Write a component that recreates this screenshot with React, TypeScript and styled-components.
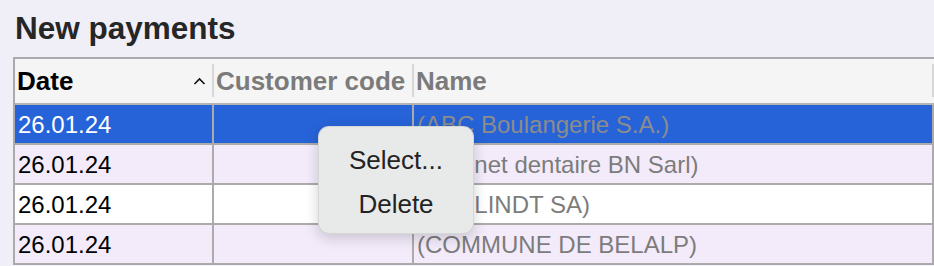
import React from "react";
import styled, { createGlobalStyle } from "styled-components";

const Global = createGlobalStyle`
  html, body { margin: 0; padding: 0; background: #f0eef7; }
  body { font-family: "Liberation Sans", Arial, sans-serif; overflow: hidden; }
`;

const Page = styled.div`
  position: relative;
  width: 934px;
  height: 266px;
  padding: 12px 0 0 13px;
  box-sizing: border-box;
`;

const Title = styled.h1`
  margin: 0 0 13px 2px;
  font-size: 31.5px;
  line-height: 32px;
  font-weight: 700;
  color: #262626;
`;

const Table = styled.div`
  width: 921px;
  border-top: 2px solid #ababab;
  border-left: 2px solid #ababab;
  box-sizing: border-box;
`;

const HeaderRow = styled.div`
  display: grid;
  grid-template-columns: 199px 200px 1fr;
  height: 46px;
  background: #f5f5f5;
  border-bottom: 2px solid #b4b4b4;
  box-sizing: border-box;
`;

const HeaderCell = styled.div<{ $active?: boolean }>`
  position: relative;
  display: flex;
  align-items: center;
  padding-left: 2px;
  font-size: 26px;
  font-weight: 700;
  line-height: 44px;
  color: ${(p) => (p.$active ? "#000" : "#7b7b7b")};
  white-space: nowrap;
  &::after {
    content: "";
    position: absolute;
    right: 0;
    top: 5px;
    bottom: 6px;
    width: 2px;
    background: #d6d6d6;
  }
`;

const SortCaret = styled.svg`
  margin-left: auto;
  margin-right: 8px;
  width: 13px;
  height: 8px;
`;

const Row = styled.div<{ $bg: string }>`
  display: grid;
  grid-template-columns: 199px 200px 1fr;
  height: 40px;
  background: ${(p) => p.$bg};
`;

const Cell = styled.div<{ $color: string }>`
  border-right: 2px solid #ababab;
  border-bottom: 2px solid #ababab;
  padding: 1px 0 0 3px;
  font-size: 24px;
  line-height: 37px;
  color: ${(p) => p.$color};
  white-space: nowrap;
  overflow: hidden;
`;

const Menu = styled.div`
  position: absolute;
  left: 318px;
  top: 126px;
  width: 156px;
  height: 108px;
  box-sizing: border-box;
  padding: 11px 0 9px;
  border-radius: 11px;
  background: #e8e9e9;
  border: 1px solid rgba(0, 0, 0, 0.08);
  box-shadow: 0 4px 14px rgba(0, 0, 0, 0.18);
  display: flex;
  flex-direction: column;
`;

const MenuItem = styled.div`
  height: 44px;
  line-height: 44px;
  text-align: center;
  font-size: 26px;
  color: #232323;
`;

const rows = [
  { date: "26.01.24", name: "(ABC Boulangerie S.A.)", bg: "#2763d8", selected: true },
  { date: "26.01.24", name: "(Cabinet dentaire BN Sarl)", bg: "#f3ebfa" },
  { date: "26.01.24", name: "(Cie. LINDT SA)", bg: "#ffffff" },
  { date: "26.01.24", name: "(COMMUNE DE BELALP)", bg: "#f3ebfa" },
];

export default function App() {
  return (
    <Page>
      <Global />
      <Title>New payments</Title>
      <Table>
        <HeaderRow>
          <HeaderCell $active>
            Date
            <SortCaret viewBox="0 0 13 8">
              <polyline points="1.5,7 6.5,2 11.5,7" fill="none" stroke="#111" strokeWidth="1.6" />
            </SortCaret>
          </HeaderCell>
          <HeaderCell>Customer code</HeaderCell>
          <HeaderCell>Name</HeaderCell>
        </HeaderRow>
        {rows.map((r, i) => (
          <Row key={i} $bg={r.bg}>
            <Cell $color={r.selected ? "#ffffff" : "#000000"}>{r.date}</Cell>
            <Cell $color="#000000" />
            <Cell $color={r.selected ? "#8c8c8c" : "#7c7c7c"}>{r.name}</Cell>
          </Row>
        ))}
      </Table>
      <Menu>
        <MenuItem>Select...</MenuItem>
        <MenuItem>Delete</MenuItem>
      </Menu>
    </Page>
  );
}
